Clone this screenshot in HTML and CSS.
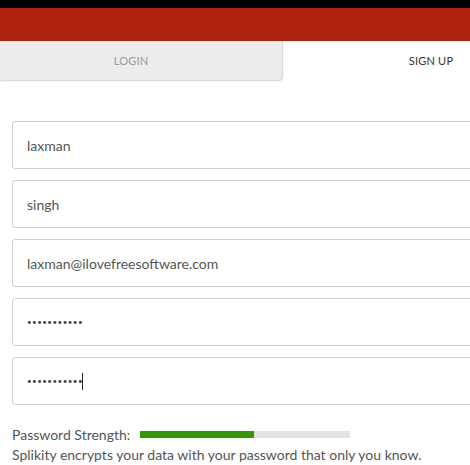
FILE: index.html
```html
<!DOCTYPE html>
<html>
<head>
<meta charset="utf-8">
<link rel="stylesheet" href="styles.css">
</head>
<body>
<div class="topbar"></div>
<div class="header"></div>
<div class="tabs">
  <div class="tab tab-inactive">LOGIN</div>
  <div class="tab tab-active">SIGN UP</div>
</div>
<form class="form">
  <input class="field" type="text" value="laxman">
  <input class="field" type="text" value="singh">
  <input class="field" type="text" value="laxman@ilovefreesoftware.com">
  <input class="field" type="password" value="abcdefghijk">
  <div class="field-wrap">
    <input class="field" type="password" value="abcdefghijk">
    <span class="caret"></span>
  </div>
</form>
<div class="strength">
  <span class="strength-label">Password Strength:</span>
  <div class="meter"><div class="meter-fill" style="width:54.3%"></div></div>
</div>
<p class="note">Splikity encrypts your data with your password that only you know.</p>
</body>
</html>
```
FILE: styles.css
```css
* { box-sizing: border-box; }
html, body { margin: 0; padding: 0; background: #fff; overflow: hidden; }
body { width: 470px; font-family: Lato, "Open Sans", sans-serif; color: #555; }
.topbar { height: 8px; background: #000; }
.header { height: 33px; background: #af2210; }
.tabs { display: flex; height: 39px; }
.tab { display: flex; align-items: center; justify-content: center; font-size: 11px; letter-spacing: 0.2px; }
.tab-inactive { width: 282px; background: #ececec; color: #9a9a9a; border-bottom-right-radius: 3px; padding-right: 20px; box-shadow: 0 1px 2px rgba(0,0,0,0.18), 1px 0 1px rgba(0,0,0,0.12); }
.tab-active { flex: 1; color: #333; padding-left: 110px; }
.form { display: flex; flex-direction: column; gap: 11px; padding: 41px 0 0 12px; width: 490px; }
.field { display: block; width: 100%; height: 48px; border: 1px solid #cfcfcf; border-radius: 3px; padding: 0 14px; font-family: Lato, "Open Sans", sans-serif; font-size: 14px; color: #555; background: #fff; outline: none; }
.field[type=password] { font-size: 8px; letter-spacing: 0.45px; color: #444; }
.field-wrap { position: relative; }
.caret { position: absolute; left: 70px; top: 16px; width: 1px; height: 17px; background: #222; }
.strength { display: flex; align-items: center; gap: 10px; padding: 21px 0 0 12px; font-size: 14px; }
.meter { width: 210px; height: 7px; background: #e3e3e3; }
.meter-fill { height: 100%; background: #339900; }
.note { margin: 3px 0 0 12px; font-size: 14px; }
```
